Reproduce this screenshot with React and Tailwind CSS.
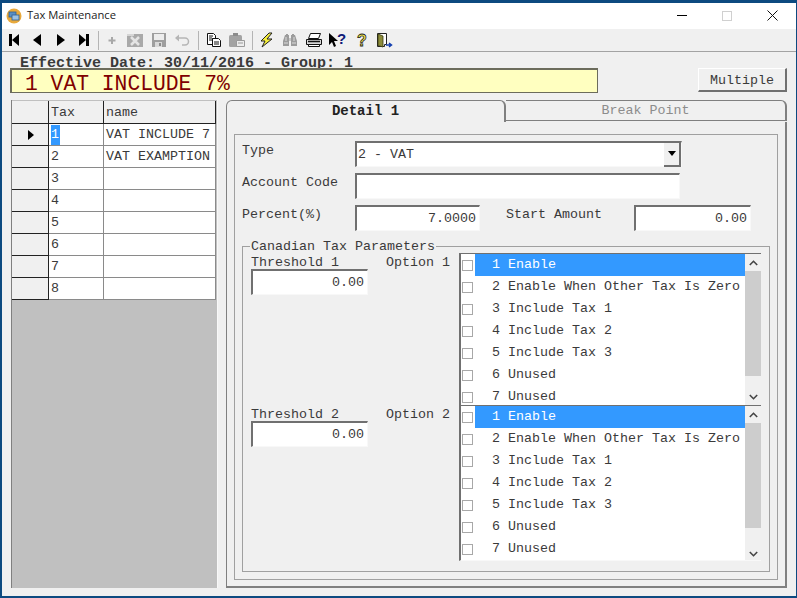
import React from "react";

const mono = "font-['Liberation_Mono','Courier_New',monospace]";

const options = [
  "1 Enable",
  "2 Enable When Other Tax Is Zero",
  "3 Include Tax 1",
  "4 Include Tax 2",
  "5 Include Tax 3",
  "6 Unused",
  "7 Unused",
];

const taxRows = [
  ["1", "VAT INCLUDE 7"],
  ["2", "VAT EXAMPTION"],
  ["3", ""],
  ["4", ""],
  ["5", ""],
  ["6", ""],
  ["7", ""],
  ["8", ""],
];

function Icon({ children }) {
  return (
    <svg width="18" height="18" viewBox="0 0 18 18" className="block">
      <g transform="translate(0 1)">{children}</g>
    </svg>
  );
}

const toolbarGroups = [
  [
    <Icon key="first"><rect x="4" y="2" width="3" height="12" fill="#000" /><path d="M14 2v12L7 8z" fill="#000" /></Icon>,
    <Icon key="prev"><path d="M13 2v12L5 8z" fill="#000" /></Icon>,
    <Icon key="next"><path d="M5 2v12l8-6z" fill="#000" /></Icon>,
    <Icon key="last"><path d="M4 2v12l7-6z" fill="#000" /><rect x="11" y="2" width="3" height="12" fill="#000" /></Icon>,
  ],
  [
    <Icon key="add"><path d="M9 5v7M5.500 8.500h7" stroke="#a8a8a8" strokeWidth="2" fill="none" /></Icon>,
    <Icon key="del">
      <rect x="1" y="2" width="16" height="13" fill="#a9a9a9" />
      <path d="M5 5l8 8M13 5l-8 8" stroke="#e4e4e4" strokeWidth="2.500" />
      <path d="M1 2h7v2H1z" fill="#d5d5d5" />
    </Icon>,
    <Icon key="save">
      <rect x="2" y="1" width="14" height="14" fill="#9e9e9e" />
      <rect x="4" y="2" width="10" height="6" fill="#ececec" />
      <rect x="5" y="10" width="7" height="5" fill="#d8d8d8" />
      <rect x="9" y="11" width="2" height="3" fill="#8c8c8c" />
    </Icon>,
    <Icon key="undo">
      <path d="M5 6h7a3.500 3.500 0 0 1 0 7H9" stroke="#b5b5b5" strokeWidth="1.500" fill="none" />
      <path d="M6 2.500v7L2 6z" fill="#b5b5b5" />
    </Icon>,
  ],
  [
    <Icon key="copy">
      <path d="M2.500 1.500h6l2 2v3h-3v6h-5z" fill="#fff" stroke="#111" />
      <path d="M7.500 6.500h6l2 2v6h-8z" fill="#fff" stroke="#111" />
      <path d="M4 4h4M4 6h3M4 8h3M9 10h5M9 12h5" stroke="#111" />
    </Icon>,
    <Icon key="paste">
      <rect x="1" y="3" width="13" height="12" rx="1.500" fill="#a3a3a3" />
      <rect x="5" y="1" width="5" height="3" fill="#8c8c8c" />
      <path d="M8.500 8.500h8v6h-8z" fill="#ececec" stroke="#9a9a9a" />
      <path d="M10 11h5" stroke="#9a9a9a" />
    </Icon>,
  ],
  [
    <Icon key="bolt"><path d="M11 1L3 9h4l-3 6 10-8H9l5-6z" fill="#f5ee3a" stroke="#222" strokeWidth="1" strokeLinejoin="round" /></Icon>,
    <Icon key="find">
      <path d="M2 9l2-6h1V2h2v1h1v11H2z" fill="#9c9c9c" />
      <path d="M16 9l-2-6h-1V2h-2v1h-1v11h6z" fill="#9c9c9c" />
      <path d="M8 6h2v3H8z" fill="#c7c7c7" />
      <path d="M3 11h4M11 11h4M5 5v4M13 5v4" stroke="#dcdcdc" />
    </Icon>,
    <Icon key="print">
      <path d="M5.500 1.500h10l-2 5h-10z" fill="#fff" stroke="#111" />
      <path d="M1.500 7.500h15v5h-15z" fill="#d8d8d8" stroke="#111" />
      <path d="M3.500 12.500h11v2h-11z" fill="#fff" stroke="#111" />
      <path d="M3 9.500h12" stroke="#111" strokeWidth="1.500" />
    </Icon>,
    <Icon key="whatsthis">
      <path d="M1 1v12l3-3 2 5 2-1-2-5h4z" fill="#000" />
      <text x="9" y="12" fontFamily="Liberation Sans, sans-serif" fontSize="15" fontWeight="700" fill="#0f1a78">?</text>
    </Icon>,
    <Icon key="help">
      <text x="5" y="14" fontFamily="Liberation Sans, sans-serif" fontSize="16" fontWeight="700" fill="#f7ee4a" stroke="#222" strokeWidth="0.800">?</text>
    </Icon>,
    <Icon key="exit">
      <path d="M2.500 1.500h9v11h-2v2h-7z" fill="#fff" stroke="#222" />
      <path d="M3 2l5 2v11l-5-1.500z" fill="#8c8c3a" stroke="#3a3a10" strokeWidth="0.800" />
      <path d="M11 13h5M14 11l2.500 2-2.500 2" stroke="#1540b0" strokeWidth="1.500" fill="none" />
    </Icon>,
  ],
];

const sepWidths = ["w-[4px]", "w-[8px]", "w-[6px]"];

function Toolbar() {
  return (
    <div className="h-[23px] bg-[#f0f0f0] border-b border-[#a3a3a3] flex items-center shrink-0">
      {toolbarGroups.map((group, i) => (
        <React.Fragment key={i}>
          {group.map((ic, j) => (
            <div key={j} className="w-[23.5px] h-[22px] flex items-center justify-center">
              {ic}
            </div>
          ))}
          {i < toolbarGroups.length - 1 && (
            <div className={`${sepWidths[i]} h-[19px] flex justify-center`}>
              <div className="w-px h-full bg-[#b4b4b4]" />
            </div>
          )}
        </React.Fragment>
      ))}
    </div>
  );
}

function TitleBar() {
  return (
    <div className="h-[26px] bg-white flex items-center shrink-0 pb-px font-['Open_Sans',sans-serif] text-[11.2px] text-[#222]">
      <svg width="16" height="16" viewBox="0 0 16 16" className="ml-[4px] mr-[5px]">
        <circle cx="8" cy="8" r="7.500" fill="#e8a93c" />
        <rect x="3" y="4" width="7" height="5" fill="#5b8fc4" stroke="#2e5f95" strokeWidth="0.800" />
        <rect x="6" y="7" width="7" height="5" fill="#9cc0e2" stroke="#2e5f95" strokeWidth="0.800" />
      </svg>
      <span>Tax Maintenance</span>
      <div className="ml-auto flex items-center">
        <div className="w-[45px] flex justify-center">
          <div className="w-[10px] h-px bg-black" />
        </div>
        <div className="w-[46px] flex justify-center">
          <div className="w-[10px] h-[10px] border border-[#d0d0d0]" />
        </div>
        <div className="w-[45px] mr-[1px] flex justify-center">
          <svg width="11" height="11" viewBox="0 0 11 11">
            <path d="M.5.500l10 10M10.500.500l-10 10" stroke="#111" strokeWidth="1" />
          </svg>
        </div>
      </div>
    </div>
  );
}

function TaxGrid() {
  const head = "bg-[#f0f0f0] border-r border-b border-[#222] h-[23px] flex items-center pl-[2px] pt-[2px] text-[#3a3a3a]";
  return (
    <div className="w-[207px] h-[488px] flex flex-col bg-[#c0c0c0] border-l border-[#808080] border-r border-r-[#f8f8f8] text-[13.33px]">
      <div className="grid grid-cols-[37px_55px_112px] mt-px">
        <div className={head} />
        <div className={head}>Tax</div>
        <div className={head}>name</div>
        {taxRows.map(([id, name]) => (
          <React.Fragment key={id}>
            <div className="h-[22px] bg-[#f0f0f0] border-r border-b border-[#222] flex items-center justify-center pl-[2px]">
              {id === "1" && (
                <svg width="8" height="10" viewBox="0 0 8 10">
                  <path d="M1 0v10l6-5z" fill="#000" />
                </svg>
              )}
            </div>
            <div className="h-[22px] bg-white border-r border-b border-[#8a8a8a] flex items-center pl-[2px] text-[#3a3a3a]">
              {id === "1" ? (
                <span className="bg-[#3399ff] text-white w-[9px] h-[20px] flex items-center pt-px">1</span>
              ) : (
                <span className="pt-px">{id}</span>
              )}
            </div>
            <div className="h-[22px] bg-white border-r border-b border-[#8a8a8a] flex items-center pl-[2px] pt-px text-[#3a3a3a] whitespace-nowrap overflow-hidden">
              {name}
            </div>
          </React.Fragment>
        ))}
      </div>
    </div>
  );
}

function Field({ className, children }) {
  return (
    <div
      className={`bg-white border-t-2 border-l-2 border-t-[#707070] border-l-[#707070] border-b border-r border-b-[#f8f8f8] border-r-[#f8f8f8] flex items-center text-[#3a3a3a] ${className}`}
    >
      {children}
    </div>
  );
}

function Arrow({ up }) {
  return (
    <svg width="9" height="6" viewBox="0 0 9 6">
      <path d={up ? "M.800 5L4.500 1.300 8.200 5" : "M.800 1L4.500 4.700 8.200 1"} stroke="#444" strokeWidth="1.600" fill="none" />
    </svg>
  );
}

function OptionList({ className, trackBelow }) {
  return (
    <div className={`w-[302px] flex bg-white border-t border-l-2 border-[#707070] overflow-hidden ${className}`}>
      <div className="flex-1 min-w-0">
        {options.map((text, i) => (
          <div key={text} className="h-[22px] flex items-center shrink-0">
            <div className="ml-px w-[11px] h-[11px] border border-[#a8a8a8] bg-white shrink-0" />
            <div
              className={`ml-[2px] flex-1 h-full flex items-center pl-[17px] whitespace-nowrap ${
                i === 0 ? "bg-[#3399ff] text-white" : "text-[#3a3a3a]"
              }`}
            >
              {text}
            </div>
          </div>
        ))}
      </div>
      <div className="w-[16px] flex flex-col bg-[#f0f0f0] shrink-0">
        <div className="h-[17px] flex items-center justify-center shrink-0">
          <Arrow up />
        </div>
        <div className="h-[105px] bg-[#cdcdcd] shrink-0" />
        <div className={`${trackBelow} shrink-0`} />
        <div className="h-[17px] flex items-center justify-center shrink-0">
          <Arrow />
        </div>
      </div>
    </div>
  );
}

function TaxOptions({ n, height, list }) {
  return (
    <div className={`flex ${height}`}>
      <div className="w-[136px] pl-px">
        <div className="h-[16px] leading-[20px]">Threshold {n}</div>
        <Field className="w-[117px] h-[26px] justify-end pr-[3px]">0.00</Field>
      </div>
      <div className="w-[73px] h-[16px] leading-[20px]">Option {n}</div>
      {list}
    </div>
  );
}

function DetailPanel() {
  return (
    <div className="w-[561px] h-[488px] flex flex-col text-[13.33px] text-[#3a3a3a]">
      <div className="flex h-[22px] shrink-0">
        <div className="w-[280px] bg-[#f0f0f0] border-t border-l border-r-2 border-[#808080] rounded-t-[6px] flex items-center justify-center font-bold text-[14px] text-[#222]">
          Detail 1
        </div>
        <div className="flex-1 border-t border-r-2 border-b border-[#808080] rounded-tr-[6px] flex items-center justify-center text-[#8c8c8c] h-[21px]">
          Break Point
        </div>
      </div>
      <div className="flex-1 border-l border-[#808080] border-r-2 border-b-2 pl-[7px] pr-[7px] pt-[12px] pb-[6px]">
        <div className="h-full border border-[#a0a0a0] pl-[7px] pt-[6px]">
          <div className="flex h-[26px]">
            <div className="w-[113px] mt-[2px] leading-[15px]">Type</div>
            <Field className="w-[327px] h-[26px] pl-[1px] justify-between">
              <span>2 - VAT</span>
              <div className="w-[17px] h-[24px] bg-[#f0f0f0] border-r-2 border-b-2 border-[#707070] flex items-center justify-center">
                <svg width="8" height="5" viewBox="0 0 8 5">
                  <path d="M0 0h8L4 5z" fill="#000" />
                </svg>
              </div>
            </Field>
          </div>
          <div className="flex h-[26px] mt-[6px]">
            <div className="w-[113px] mt-[2px] leading-[15px]">Account Code</div>
            <Field className="w-[325px] h-[26px]" />
          </div>
          <div className="flex h-[25px] mt-[6px]">
            <div className="w-[113px] mt-[2px] leading-[15px]">Percent(%)</div>
            <Field className="w-[125px] h-[26px] justify-end pr-[3px]">7.0000</Field>
            <div className="w-[128px] ml-[26px] mt-[2px] leading-[15px]">Start Amount</div>
            <Field className="w-[117px] h-[26px] justify-end pr-[3px]">0.00</Field>
          </div>
          <fieldset className="w-[528px] h-[332px] mt-[10px] border border-[#a0a0a0] pl-[7px]">
            <legend className="leading-[13px] px-px">Canadian Tax Parameters</legend>
            <TaxOptions
              n={1}
              height="h-[152px]"
              list={<OptionList className="h-[152px]" trackBelow="h-[12px]" />}
            />
            <TaxOptions
              n={2}
              height="h-[156px]"
              list={<OptionList className="h-[156px] border-b border-b-[#f8f8f8]" trackBelow="h-[17px]" />}
            />
          </fieldset>
        </div>
      </div>
    </div>
  );
}

export default function App() {
  return (
    <div
      className={`w-[797px] h-[598px] flex flex-col overflow-hidden bg-[#f0f0f0] border-t-[3px] border-l-2 border-r border-b-2 border-[#0d4a80] ${mono}`}
    >
      <TitleBar />
      <Toolbar />
      <div className="h-[10px] mt-[6px] ml-[18px] leading-[11px] text-[15px] font-bold text-[#3a3a3a] whitespace-nowrap">
        Effective Date: 30/11/2016 - Group: 1
      </div>
      <div className="flex ml-[8px]">
        <div className="w-[588px] h-[25px] bg-[#ffffc0] border-2 border-[#6c6c5c] border-b border-r flex items-start pl-[13px] pt-[4px] text-[21.33px] leading-none text-[#800000]">
          1 VAT INCLUDE 7%
        </div>
        <div className="w-[89px] h-[24px] ml-[100px] pt-[2px] bg-[#f0f0f0] border-t border-l border-[#ffffff] border-r-2 border-b-2 border-r-[#707070] border-b-[#707070] flex items-center justify-center text-[13.33px] text-[#3a3a3a]">
          Multiple
        </div>
      </div>
      <div className="flex mt-[7px] ml-[9px]">
        <TaxGrid />
        <div className="w-[8px]" />
        <DetailPanel />
      </div>
    </div>
  );
}
